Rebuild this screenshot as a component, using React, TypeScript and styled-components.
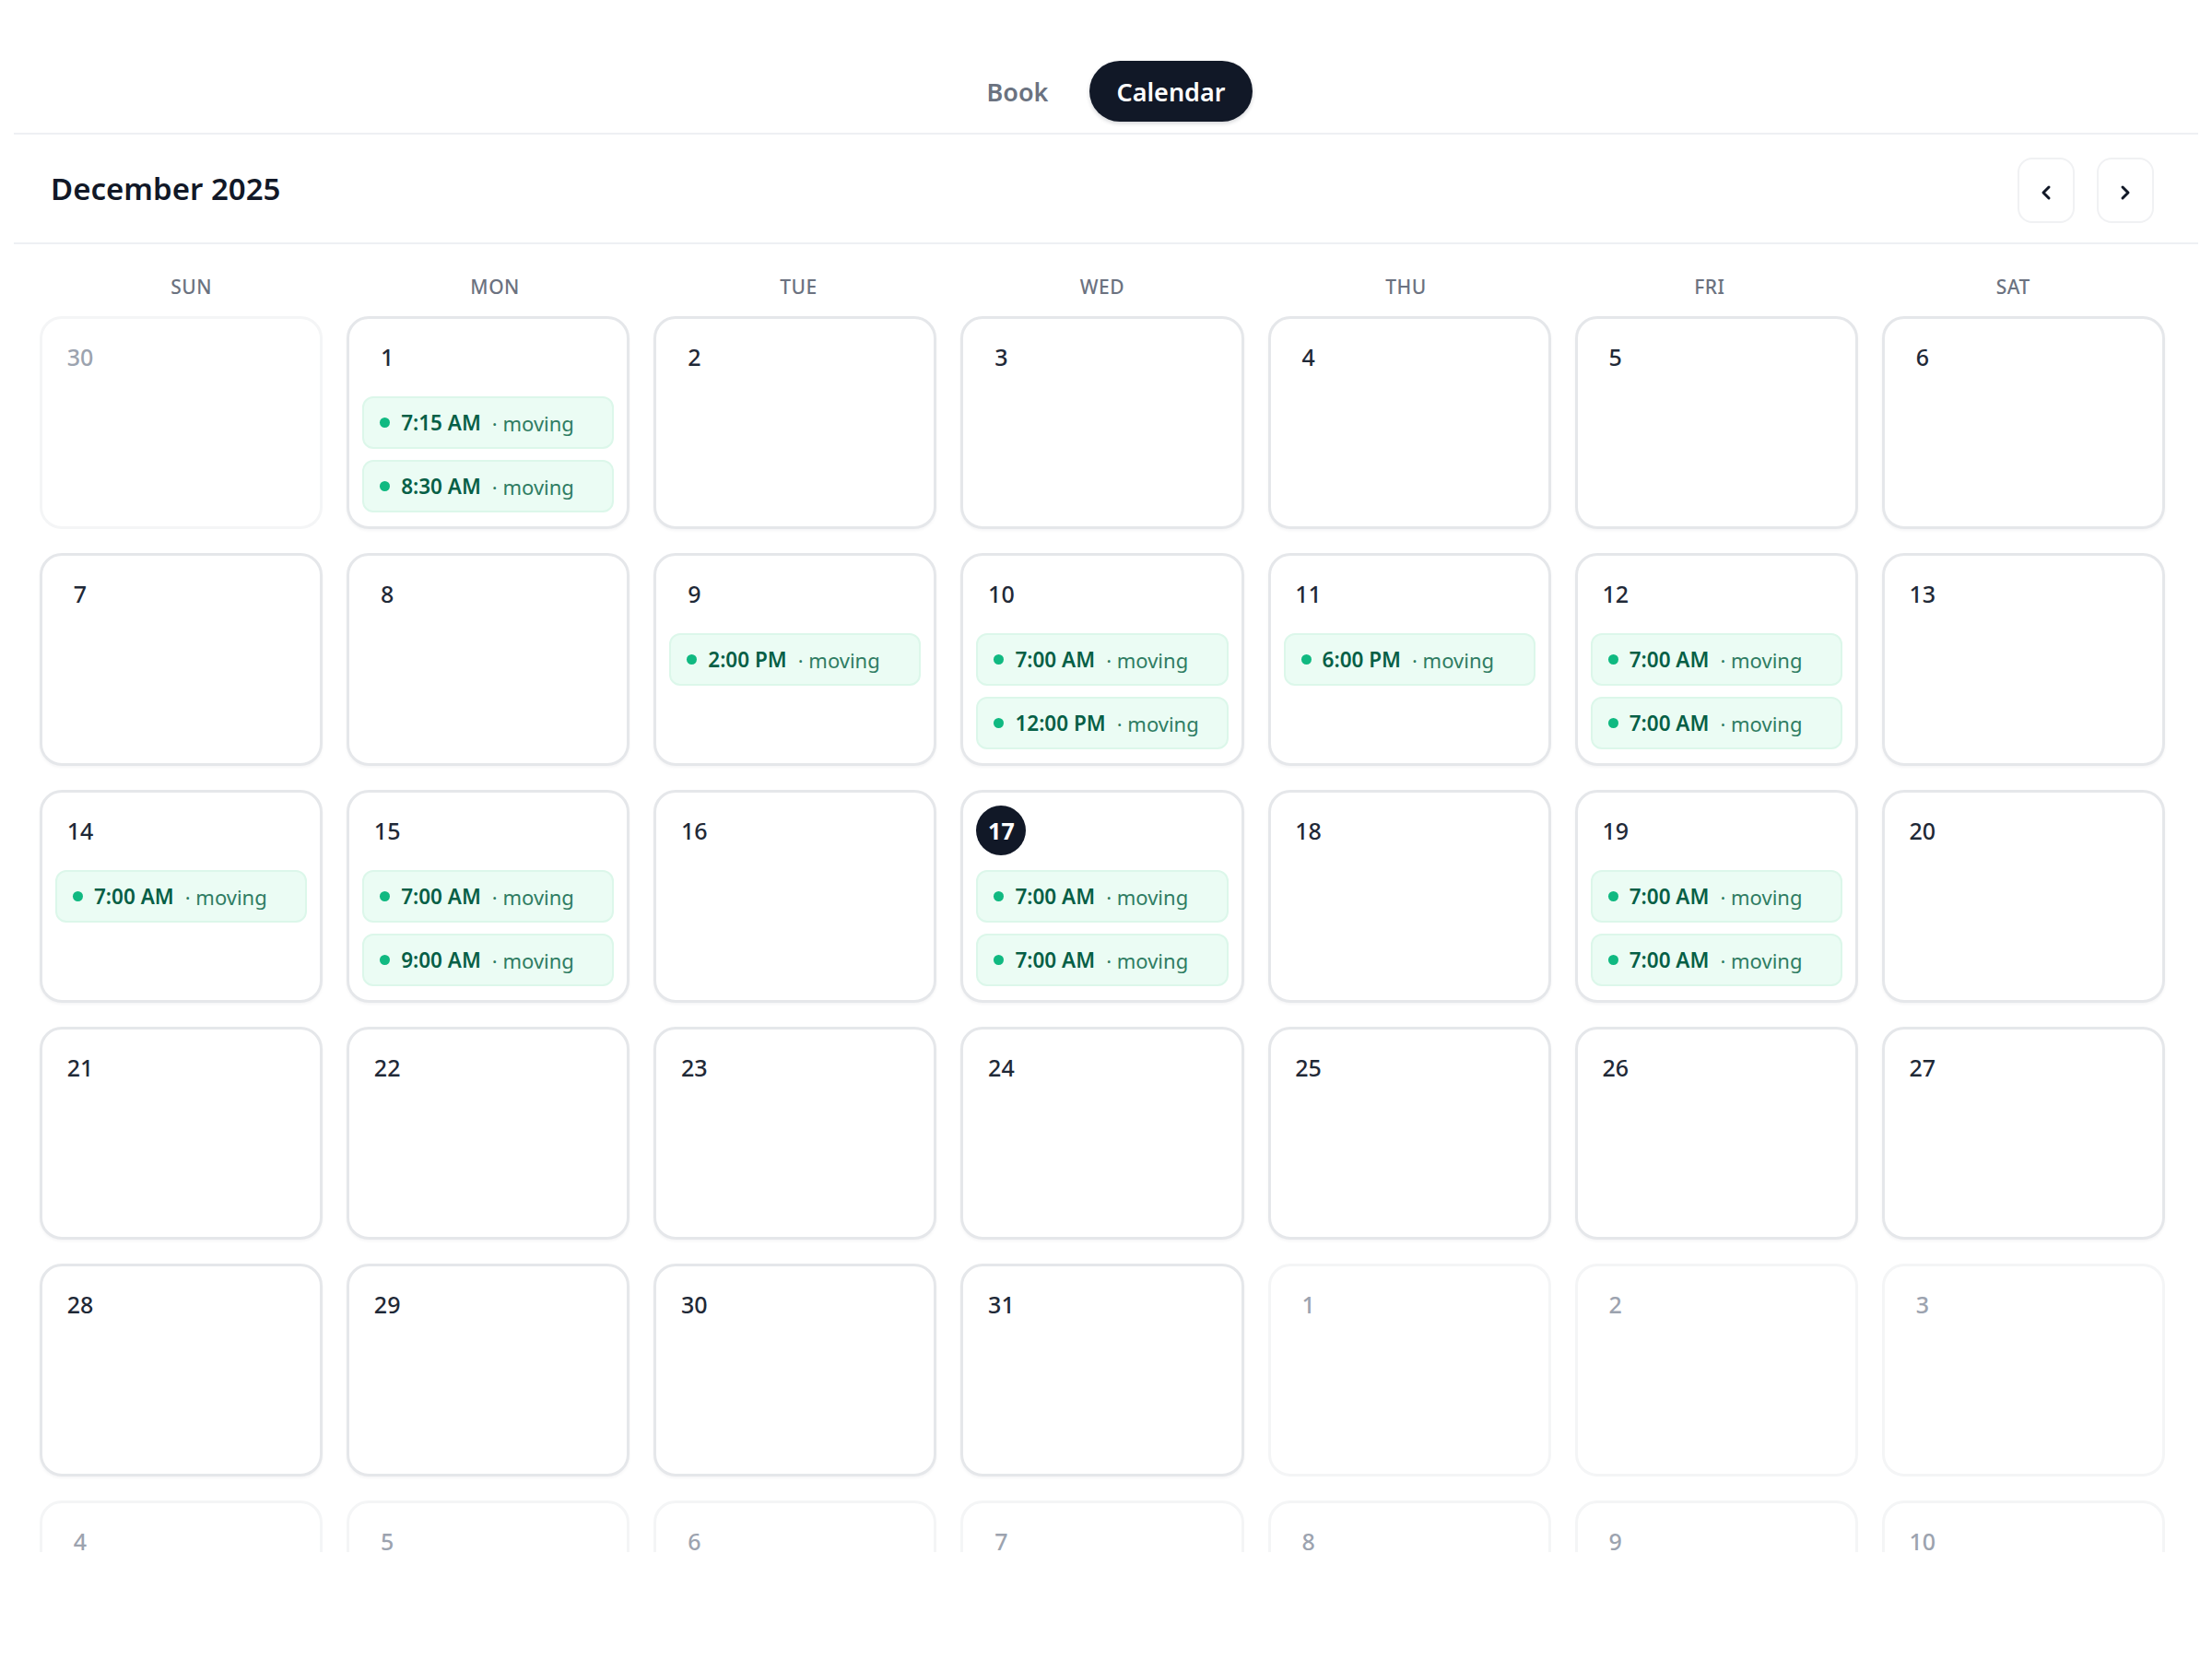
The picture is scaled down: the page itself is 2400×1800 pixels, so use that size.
import React from 'react'
import styled, { createGlobalStyle } from 'styled-components'
import { ChevronLeft, ChevronRight } from 'lucide-react'

const GlobalStyle = createGlobalStyle`
  html, body {
    margin: 0;
    padding: 0;
    background: #ffffff;
  }
  body {
    font-family: 'Noto Sans', 'Open Sans', sans-serif;
    color: #111827;
  }
  * {
    box-sizing: border-box;
  }
`

const Page = styled.div`
  padding: 0 15px;
  height: 1800px;
  overflow: hidden;
`

const TabBar = styled.div`
  display: flex;
  justify-content: center;
  gap: 16px;
  padding: 66px 0 12px;
  border-bottom: 2px solid #eef0f3;
`

const Tab = styled.button<{ $active?: boolean }>`
  height: 66px;
  padding: 0 29px;
  border: none;
  border-radius: 999px;
  font-family: inherit;
  font-size: 27px;
  font-weight: 600;
  cursor: pointer;
  background: ${(p) => (p.$active ? '#111827' : 'transparent')};
  color: ${(p) => (p.$active ? '#ffffff' : '#6b7280')};
  box-shadow: ${(p) => (p.$active ? '0 2px 4px rgba(17, 24, 39, 0.18)' : 'none')};
`

const Header = styled.div`
  display: flex;
  align-items: center;
  justify-content: space-between;
  height: 119px;
  padding: 0 48px 0 40px;
  border-bottom: 2px solid #eef0f3;
`

const Title = styled.h2`
  margin: 0;
  font-size: 33px;
  font-weight: 600;
  color: #111827;
`

const NavGroup = styled.div`
  display: flex;
  gap: 24px;
  padding-top: 4px;
`

const NavButton = styled.button`
  width: 62px;
  height: 71px;
  display: flex;
  align-items: center;
  justify-content: center;
  padding-top: 6px;
  background: #ffffff;
  border: 2px solid #f0f1f3;
  border-radius: 16px;
  color: #111827;
  cursor: pointer;
`

const Weekdays = styled.div`
  display: grid;
  grid-template-columns: repeat(7, 1fr);
  padding: 0 36px 0 28px;
  margin-top: 28px;
  height: 36px;
  align-items: center;
`

const Weekday = styled.div`
  text-align: center;
  font-size: 21px;
  font-weight: 500;
  letter-spacing: 0.5px;
  color: #6b7280;
`

const GridViewport = styled.div`
  margin-top: 14px;
  height: 1341px;
  overflow: hidden;
`

const Grid = styled.div`
  display: grid;
  grid-template-columns: repeat(7, 1fr);
  grid-auto-rows: 231px;
  gap: 26px;
  padding: 0 36px 0 28px;
`

const Cell = styled.div<{ $muted?: boolean }>`
  display: flex;
  flex-direction: column;
  padding: 14px 14px 12px;
  border-radius: 24px;
  border: 3px solid ${(p) => (p.$muted ? '#f4f5f6' : '#e5e7ea')};
  background: #ffffff;
  box-shadow: ${(p) => (p.$muted ? 'none' : '0 2px 3px rgba(17, 24, 39, 0.04)')};
`

const DayNumber = styled.div<{ $muted?: boolean; $today?: boolean }>`
  width: 54px;
  height: 54px;
  flex-shrink: 0;
  display: flex;
  align-items: center;
  justify-content: center;
  border-radius: 50%;
  font-size: 25px;
  font-weight: ${(p) => (p.$today ? 700 : 500)};
  background: ${(p) => (p.$today ? '#111827' : 'transparent')};
  color: ${(p) => (p.$today ? '#ffffff' : p.$muted ? '#9ca3af' : '#1f2937')};
`

const Events = styled.div`
  display: flex;
  flex-direction: column;
  gap: 12px;
  margin-top: 16px;
`

const Event = styled.div`
  height: 57px;
  display: flex;
  align-items: center;
  gap: 12px;
  padding: 0 17px;
  border-radius: 12px;
  background: #ebfcf4;
  border: 2px solid #dcf7ea;
  white-space: nowrap;
  overflow: hidden;
`

const Dot = styled.span`
  width: 11px;
  height: 11px;
  border-radius: 50%;
  background: #10b981;
  flex-shrink: 0;
`

const Time = styled.span`
  font-size: 22.5px;
  font-weight: 600;
  color: #065f46;
`

const Kind = styled.span`
  font-size: 22px;
  font-weight: 400;
  color: #2f7d63;
`

const WEEKDAYS = ['SUN', 'MON', 'TUE', 'WED', 'THU', 'FRI', 'SAT']

const EVENTS: Record<number, string[]> = {
  1: ['7:15 AM', '8:30 AM'],
  9: ['2:00 PM'],
  10: ['7:00 AM', '12:00 PM'],
  11: ['6:00 PM'],
  12: ['7:00 AM', '7:00 AM'],
  14: ['7:00 AM'],
  15: ['7:00 AM', '9:00 AM'],
  17: ['7:00 AM', '7:00 AM'],
  19: ['7:00 AM', '7:00 AM'],
}

const TODAY = 17

type Day = { day: number; inMonth: boolean }

function buildDays(): Day[] {
  const days: Day[] = [{ day: 30, inMonth: false }]
  for (let d = 1; d <= 31; d++) days.push({ day: d, inMonth: true })
  for (let d = 1; days.length < 42; d++) days.push({ day: d, inMonth: false })
  return days
}

function App() {
  const days = buildDays()

  return (
    <Page>
      <GlobalStyle />
      <TabBar>
        <Tab>Book</Tab>
        <Tab $active>Calendar</Tab>
      </TabBar>

      <Header>
        <Title>December 2025</Title>
        <NavGroup>
          <NavButton aria-label="Previous month">
            <ChevronLeft size={24} strokeWidth={3} />
          </NavButton>
          <NavButton aria-label="Next month">
            <ChevronRight size={24} strokeWidth={3} />
          </NavButton>
        </NavGroup>
      </Header>

      <Weekdays>
        {WEEKDAYS.map((w) => (
          <Weekday key={w}>{w}</Weekday>
        ))}
      </Weekdays>

      <GridViewport>
        <Grid>
          {days.map((d, i) => {
            const events = d.inMonth ? EVENTS[d.day] ?? [] : []
            return (
              <Cell key={i} $muted={!d.inMonth}>
                <DayNumber $muted={!d.inMonth} $today={d.inMonth && d.day === TODAY}>
                  {d.day}
                </DayNumber>
                {events.length > 0 && (
                  <Events>
                    {events.map((t, j) => (
                      <Event key={j}>
                        <Dot />
                        <Time>{t}</Time>
                        <Kind>· moving</Kind>
                      </Event>
                    ))}
                  </Events>
                )}
              </Cell>
            )
          })}
        </Grid>
      </GridViewport>
    </Page>
  )
}

export default App
